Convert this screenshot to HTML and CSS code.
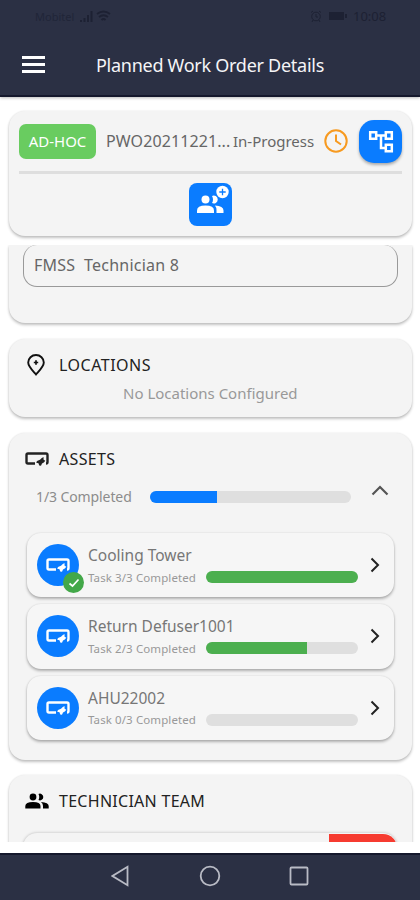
FILE: index.html
```
<!DOCTYPE html>
<html lang="en">
<head>
<meta charset="utf-8">
<title>Planned Work Order Details</title>
<link rel="stylesheet" href="styles.css">
</head>
<body>
<svg class="defs" width="0" height="0">
  <symbol id="asset" viewBox="0 0 24 16">
    <path d="M10 12.500H3Q1.500 12.500 1.500 11V4Q1.500 2.500 3 2.500H21Q22.500 2.500 22.500 4V11Q22.500 12.500 21 12.500" fill="none" stroke="currentColor" stroke-width="2.400"/>
    <path d="M18.500 6L16.500 7.200L15 8.800L12 10L11.200 11.800L13.500 12.200L14.200 14.500L16 14.800L17 12.600L18.800 11.600L20.300 9.800L18.600 8.800Z" fill="currentColor"/>
  </symbol>
  <symbol id="people" viewBox="0 0 24 16">
    <circle cx="8" cy="4" r="3.400" fill="currentColor"/>
    <path d="M.3 15.500V13Q.5 9 8 9T15.500 13V15.500ZM13.500.9A3.400 3.400 0 1 1 13.500 7.100Q15 4 13.500.9ZM16 9Q23.700 9.500 23.700 13V15.500H18V13Q18 10.500 16 9Z" fill="currentColor"/>
  </symbol>
  <symbol id="next" viewBox="0 0 10 16"><path d="M1.500 1.500L8 8L1.500 14.500" fill="none" stroke="currentColor" stroke-width="2"/></symbol>
</svg>
<header class="top">
  <div class="status">
    <span class="carrier">Mobitel</span>
    <svg class="signal" width="32" height="13" viewBox="0 0 32 13"><path d="M1 12V10H3V12ZM4.500 12V8H6.500V12ZM8 12V5H10V12ZM11.500 12V1H13.500V12Z" fill="currentColor"/><path d="M18 4Q24.500-1 31 4M20 7Q24.500 3.500 29 7M22.500 10Q24.500 8 26.500 10" fill="none" stroke="currentColor" stroke-width="1.800"/></svg>
    <span class="grow"></span>
    <svg class="alarm" width="12" height="12" viewBox="0 0 12 12" fill="none" stroke="currentColor"><circle cx="6" cy="6.500" r="4.300"/><path d="M6 4V7H8M1 2.500L3 1M9 1L11 2.500M3 10L2 12M9 10L10 12"/></svg>
    <svg class="battery" width="20" height="10" viewBox="0 0 20 10"><path d="M1 1H16V9H1ZM17 3H19V7H17Z" fill="currentColor"/></svg>
    <span class="clock">10:08</span>
  </div>
  <div class="titlebar">
    <svg width="23" height="17" viewBox="0 0 23 17"><path d="M0 1.500H23M0 8.500H23M0 15.500H23" stroke="#fff" stroke-width="3"/></svg>
    <h1>Planned Work Order Details</h1>
  </div>
</header>
<section class="card summary">
  <div class="order">
    <span class="tag">AD-HOC</span>
    <span class="number">PWO20211221...</span>
    <span class="state">In-Progress</span>
    <svg class="time" width="24" height="24" viewBox="0 0 24 24" fill="none" stroke="#f79a20" stroke-width="2"><circle cx="12" cy="12" r="10.700"/><path d="M12 5.500V12L17 15.500"/></svg>
    <span class="tree"><svg width="26" height="26" viewBox="0 0 26 26" fill="none" stroke="#fff" stroke-width="2.500"><path d="M2.200 3.200H8.200V9.800H2.200ZM17.800 3.200H23.800V9.800H17.800ZM17.800 15.700H23.800V22.300H17.800ZM8.500 6.500H17.500M13 6.500V19H17.500"/></svg></span>
  </div>
  <div class="actions">
    <span class="assign"><svg width="43" height="43" viewBox="0 0 43 43"><g fill="#fff"><circle cx="16.500" cy="16.500" r="4"/><path d="M8 30V27.500Q8 22.500 16.500 22.500T25 27.500V30Z"/><path d="M23 12.900A4 4 0 1 1 23 20.100Q25 16.500 23 12.900ZM26 22.500Q34.500 23 34.500 27.500V30H27.500V27Q27.500 24.500 26 22.500Z"/><circle cx="33.500" cy="9" r="6.200"/></g><path d="M33.500 5.800V12.200M30.300 9H36.700" stroke="#0a7cff" stroke-width="1.300"/></svg></span>
  </div>
</section>
<main class="scroll">
  <section class="card assignee"><div class="field">FMSS&nbsp; Technician 8</div></section>
  <section class="card locations">
    <h2><svg width="18" height="22" viewBox="0 0 18 22"><path d="M9 20.500C6 17 1.200 12.500 1.200 8.500A7.800 7.500 0 0 1 16.800 8.500C16.800 12.500 12 17 9 20.500Z" fill="none" stroke="#111" stroke-width="1.900"/><path d="M9 6.300V10.700M6.800 8.500H11.200" stroke="#111" stroke-width="1.700"/></svg><span class="loc">LOCATIONS</span></h2>
    <p>No Locations Configured</p>
  </section>
  <section class="card assets">
    <h2><svg class="dark" width="24" height="16"><use href="#asset"/></svg><span class="ast">ASSETS</span></h2>
    <div class="overall"><span class="done">1/3 Completed</span><div class="bar blue"><i class="third"></i></div><svg width="18" height="11" viewBox="0 0 18 11"><path d="M1.500 9.500L9 2L16.500 9.500" fill="none" stroke="#555" stroke-width="2.200"/></svg></div>
    <div class="list">
      <article class="asset">
        <div class="avatar"><svg width="24" height="16"><use href="#asset"/></svg><span class="check"><svg width="12" height="10" viewBox="0 0 12 10"><path d="M1.500 5.500L4.500 8L10.500 1.500" fill="none" stroke="#fff" stroke-width="1.700"/></svg></span></div>
        <div class="info"><h3>Cooling Tower</h3><div class="task"><span>Task 3/3 Completed</span><div class="bar"><i class="full"></i></div></div></div>
        <svg class="next" width="10" height="16"><use href="#next"/></svg>
      </article>
      <article class="asset">
        <div class="avatar"><svg width="24" height="16"><use href="#asset"/></svg></div>
        <div class="info"><h3>Return Defuser1001</h3><div class="task"><span>Task 2/3 Completed</span><div class="bar"><i class="two"></i></div></div></div>
        <svg class="next" width="10" height="16"><use href="#next"/></svg>
      </article>
      <article class="asset">
        <div class="avatar"><svg width="24" height="16"><use href="#asset"/></svg></div>
        <div class="info"><h3>AHU22002</h3><div class="task"><span>Task 0/3 Completed</span><div class="bar"></div></div></div>
        <svg class="next" width="10" height="16"><use href="#next"/></svg>
      </article>
    </div>
  </section>
  <section class="card team">
    <h2><svg class="dark" width="24" height="16"><use href="#people"/></svg><span class="tt">TECHNICIAN TEAM</span></h2>
    <div class="member"><span class="remove"></span></div>
  </section>
</main>
<nav class="nav">
  <svg width="18" height="22" viewBox="0 0 18 22"><path d="M16.500 1.800V20.200L1.500 11Z"/></svg>
  <svg width="22" height="22" viewBox="0 0 22 22"><circle cx="11" cy="11" r="9.300"/></svg>
  <svg width="20" height="20" viewBox="0 0 20 20"><rect x="1.500" y="1.500" width="17" height="17" rx="1"/></svg>
</nav>
</body>
</html>
```
FILE: styles.css
```
* { box-sizing: border-box; }
body { margin: 0; width: 420px; height: 900px; overflow: hidden; background: #fff; font-family: "Noto Sans", "Open Sans", sans-serif; display: flex; flex-direction: column; }
svg { display: block; flex: none; }
.defs { position: absolute; }
h1, h2, h3, p { margin: 0; font-weight: 400; white-space: nowrap; }
span { white-space: nowrap; }
.top { height: 97px; flex: none; background: #2b3044; border-bottom: 2px solid #15182c; box-shadow: 0 1px 3px #bbb; }
.status { height: 32px; padding: 0 34px 0 35px; display: flex; align-items: center; color: #1d2133; font-size: 12px; }
.carrier { width: 44px; font-size: 11px; color: #202538; }
.grow { flex: 1; }
.alarm { margin-right: 6px; }
.battery { margin-right: 5px; }
.clock { width: 33px; font-size: 13px; }
.titlebar { height: 65px; padding: 0 0 0 22px; display: flex; align-items: center; }
.titlebar h1 { margin-left: 51px; font-size: 18px; letter-spacing: -.27px; color: #f5f5f7; line-height: 24px; }
.card { margin: 0 8px 0 9px; background: #f4f4f4; border-radius: 16px; box-shadow: 0 2px 3px rgba(0,0,0,.24), 0 0 2px rgba(0,0,0,.1); flex: none; }
.summary { height: 125px; margin-top: 14px; padding: 8px 10px 0; }
.order { height: 55px; border-bottom: 3px solid #dedede; display: flex; align-items: flex-start; color: #666; font-size: 16px; }
.tag { width: 77px; height: 35px; margin-top: 5px; border-radius: 7px; background: #69cc60; color: #fff; text-align: center; line-height: 35px; font-size: 15px; }
.number { width: 127px; margin-left: 10px; line-height: 45px; letter-spacing: .1px; }
.state { width: 91px; line-height: 45px; font-size: 15px; }
.time { margin-top: 10px; }
.tree { width: 43px; height: 43px; margin-left: 11px; margin-top: 1px; border-radius: 15px; background: #0a7cff; display: grid; place-items: center; box-shadow: 0 2px 3px rgba(0,0,0,.3); }
.actions { display: flex; justify-content: center; padding-top: 9px; }
.assign { width: 43px; height: 43px; background: #0a7cff; border-radius: 8px; }
.scroll { height: 597px; margin-top: 9px; overflow: hidden; flex: none; }
.assignee { height: 78px; border-radius: 0 0 16px 16px; padding: 0 14px; }
.field { height: 42px; border: 1px solid #999; border-top: 0; border-radius: 14px; padding-left: 10px; line-height: 40px; font-size: 16px; letter-spacing: .22px; color: #666; }
.locations { height: 78px; margin-top: 16px; padding: 14px 17px 0 18px; }
h2 { height: 24px; display: flex; align-items: center; color: #222; font-size: 16px; line-height: 24px; }
.loc { letter-spacing: .5px; }
.ast { letter-spacing: .35px; }
.tt { letter-spacing: .28px; }
.locations h2 span { margin-left: 14px; }
.locations p { color: #999; font-size: 15px; line-height: 24px; margin: 4px 0 0 96px; }
.assets { height: 327px; margin-top: 16px; padding: 14px 17px 0 16px; }
.assets h2 span, .team h2 span { margin-left: 10px; }
.dark { color: #222; }
.team .dark { color: #000; }
.overall { height: 51px; padding: 0 6px 0 11px; display: flex; align-items: center; }
.done { width: 114px; color: #8c8c8c; font-size: 14px; letter-spacing: -.1px; }
.overall svg { margin: -12px 0 0 20px; }
.bar { width: 152px; height: 12px; border-radius: 6px; overflow: hidden; background: #dfdfdf; flex: none; }
.bar i { display: block; height: 100%; background: #4caf4f; }
.bar .full { width: 100%; }
.bar .two { width: 66.5%; }
.bar.blue { width: 201px; }
.bar .third { width: 33.300%; background: #0a7cff; }
.list { display: flex; flex-direction: column; gap: 7px; margin: 11px 1px 0 2px; }
.asset { height: 64.300px; border-radius: 14px; background: #f6f6f6; box-shadow: 0 2px 3px rgba(0,0,0,.28), 0 0 2px rgba(0,0,0,.12); padding: 0 14px 0 10px; display: flex; align-items: center; }
.avatar { width: 42px; height: 42px; border-radius: 50%; background: #0a7cff; color: #fff; position: relative; display: grid; place-items: center; flex: none; }
.check { position: absolute; left: 26px; top: 28px; width: 21px; height: 21px; border-radius: 50%; background: #43a849; display: grid; place-items: center; }
.info { margin-left: 9px; padding-top: 2px; flex: 1; }
h3 { font-size: 15.500px; line-height: 22px; color: #777; }
.task { height: 22px; display: flex; align-items: center; color: #999; font-size: 11.500px; letter-spacing: .1px; }
.task span { width: 118px; }
.next { color: #222; }
.team { height: 110px; margin-top: 15px; padding: 14px 15px 0 16px; }
.member { height: 60px; margin: 20px 0 0 -2px; border-radius: 14px; box-shadow: 0 0 3px rgba(0,0,0,.25); overflow: hidden; display: flex; justify-content: flex-end; padding-top: 1px; }
.remove { width: 68px; background: #f63b30; border-radius: 0 14px 0 0; }
.nav { height: 47px; margin-top: 11px; background: #2b3044; border-top: 2px solid #15182c; display: flex; align-items: center; padding: 0 0 3px 111px; flex: none; fill: none; stroke: #b9bbc5; stroke-width: 1.800; }
.nav svg:nth-child(2) { margin-left: 70px; }
.nav svg:nth-child(3) { margin-left: 68px; }
```
